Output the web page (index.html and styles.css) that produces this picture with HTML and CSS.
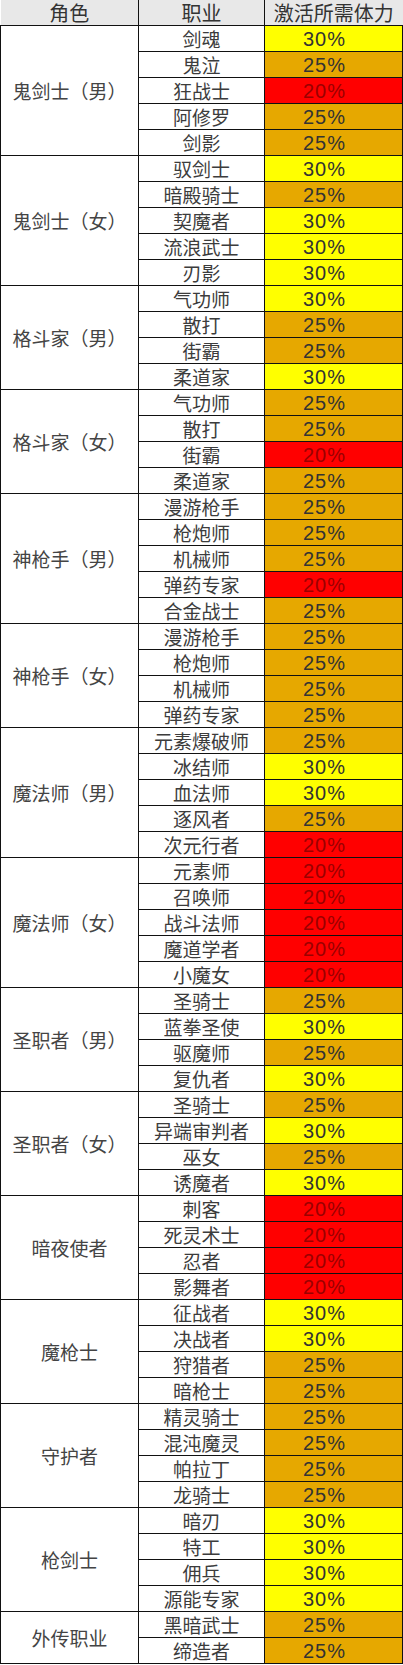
FILE: index.html
```html
<!DOCTYPE html>
<html lang="zh-CN">
<head>
<meta charset="utf-8">
<title>激活所需体力</title>
<link rel="stylesheet" href="styles.css">
</head>
<body>
<table class="grid">
<colgroup><col class="c1"><col class="c2"><col class="c3"></colgroup>
<thead>
<tr><th class="h1">角色</th><th>职业</th><th class="h3">激活所需体力</th></tr>
</thead>
<tbody>
<tr><td class="role" rowspan="5">鬼剑士（男）</td><td>剑魂</td><td class="p30">30%</td></tr>
<tr><td>鬼泣</td><td class="p25">25%</td></tr>
<tr><td>狂战士</td><td class="p20">20%</td></tr>
<tr><td>阿修罗</td><td class="p25">25%</td></tr>
<tr><td>剑影</td><td class="p25">25%</td></tr>

<tr><td class="role" rowspan="5">鬼剑士（女）</td><td>驭剑士</td><td class="p30">30%</td></tr>
<tr><td>暗殿骑士</td><td class="p25">25%</td></tr>
<tr><td>契魔者</td><td class="p30">30%</td></tr>
<tr><td>流浪武士</td><td class="p30">30%</td></tr>
<tr><td>刃影</td><td class="p30">30%</td></tr>

<tr><td class="role" rowspan="4">格斗家（男）</td><td>气功师</td><td class="p30">30%</td></tr>
<tr><td>散打</td><td class="p25">25%</td></tr>
<tr><td>街霸</td><td class="p25">25%</td></tr>
<tr><td>柔道家</td><td class="p30">30%</td></tr>

<tr><td class="role" rowspan="4">格斗家（女）</td><td>气功师</td><td class="p25">25%</td></tr>
<tr><td>散打</td><td class="p25">25%</td></tr>
<tr><td>街霸</td><td class="p20">20%</td></tr>
<tr><td>柔道家</td><td class="p25">25%</td></tr>

<tr><td class="role" rowspan="5">神枪手（男）</td><td>漫游枪手</td><td class="p25">25%</td></tr>
<tr><td>枪炮师</td><td class="p25">25%</td></tr>
<tr><td>机械师</td><td class="p25">25%</td></tr>
<tr><td>弹药专家</td><td class="p20">20%</td></tr>
<tr><td>合金战士</td><td class="p25">25%</td></tr>

<tr><td class="role" rowspan="4">神枪手（女）</td><td>漫游枪手</td><td class="p25">25%</td></tr>
<tr><td>枪炮师</td><td class="p25">25%</td></tr>
<tr><td>机械师</td><td class="p25">25%</td></tr>
<tr><td>弹药专家</td><td class="p25">25%</td></tr>

<tr><td class="role" rowspan="5">魔法师（男）</td><td>元素爆破师</td><td class="p25">25%</td></tr>
<tr><td>冰结师</td><td class="p30">30%</td></tr>
<tr><td>血法师</td><td class="p30">30%</td></tr>
<tr><td>逐风者</td><td class="p25">25%</td></tr>
<tr><td>次元行者</td><td class="p20">20%</td></tr>

<tr><td class="role" rowspan="5">魔法师（女）</td><td>元素师</td><td class="p20">20%</td></tr>
<tr><td>召唤师</td><td class="p20">20%</td></tr>
<tr><td>战斗法师</td><td class="p20">20%</td></tr>
<tr><td>魔道学者</td><td class="p20">20%</td></tr>
<tr><td>小魔女</td><td class="p20">20%</td></tr>

<tr><td class="role" rowspan="4">圣职者（男）</td><td>圣骑士</td><td class="p25">25%</td></tr>
<tr><td>蓝拳圣使</td><td class="p30">30%</td></tr>
<tr><td>驱魔师</td><td class="p25">25%</td></tr>
<tr><td>复仇者</td><td class="p30">30%</td></tr>

<tr><td class="role" rowspan="4">圣职者（女）</td><td>圣骑士</td><td class="p25">25%</td></tr>
<tr><td>异端审判者</td><td class="p30">30%</td></tr>
<tr><td>巫女</td><td class="p25">25%</td></tr>
<tr><td>诱魔者</td><td class="p30">30%</td></tr>

<tr><td class="role" rowspan="4">暗夜使者</td><td>刺客</td><td class="p20">20%</td></tr>
<tr><td>死灵术士</td><td class="p20">20%</td></tr>
<tr><td>忍者</td><td class="p20">20%</td></tr>
<tr><td>影舞者</td><td class="p20">20%</td></tr>

<tr><td class="role" rowspan="4">魔枪士</td><td>征战者</td><td class="p30">30%</td></tr>
<tr><td>决战者</td><td class="p30">30%</td></tr>
<tr><td>狩猎者</td><td class="p25">25%</td></tr>
<tr><td>暗枪士</td><td class="p25">25%</td></tr>

<tr><td class="role" rowspan="4">守护者</td><td>精灵骑士</td><td class="p25">25%</td></tr>
<tr><td>混沌魔灵</td><td class="p25">25%</td></tr>
<tr><td>帕拉丁</td><td class="p25">25%</td></tr>
<tr><td>龙骑士</td><td class="p25">25%</td></tr>

<tr><td class="role" rowspan="4">枪剑士</td><td>暗刃</td><td class="p30">30%</td></tr>
<tr><td>特工</td><td class="p30">30%</td></tr>
<tr><td>佣兵</td><td class="p30">30%</td></tr>
<tr><td>源能专家</td><td class="p30">30%</td></tr>

<tr><td class="role" rowspan="2">外传职业</td><td>黑暗武士</td><td class="p25">25%</td></tr>
<tr><td>缔造者</td><td class="p25">25%</td></tr>
</tbody>
</table>
</body>
</html>
```

FILE: styles.css
```css
html, body {
  margin: 0;
  padding: 0;
  background: #ffffff;
}

.grid {
  border-collapse: collapse;
  table-layout: fixed;
  width: 402px;
}

.c1 { width: 138px; }
.c2 { width: 126px; }
.c3 { width: 138px; }

.grid th,
.grid td {
  height: 25px;
  padding: 0;
  border: 1px solid #111111;
  text-align: center;
  vertical-align: middle;
  font-family: "Noto Sans CJK SC", sans-serif;
  font-size: 19px;
  font-weight: 400;
  line-height: 1;
  color: #3c3c3c;
  white-space: nowrap;
}

.grid th {
  background: #e8e8e8;
  border-top: none;
  font-size: 20px;
  color: #333333;
}

.grid th.h1 { border-left: none; }
.grid th.h3 { border-right: none; }

.grid td.role {
  color: #444444;
}

.grid td.p20,
.grid td.p25,
.grid td.p30 {
  font-family: "Liberation Sans", Arial, sans-serif;
  font-size: 20px;
  letter-spacing: 1px;
  padding-right: 18px;
  color: #333333;
}

.grid td.p30 { background: #ffff00; }
.grid td.p25 { background: #e6a800; }
.grid td.p20 { background: #ff0000; color: #9a0000; }
```
